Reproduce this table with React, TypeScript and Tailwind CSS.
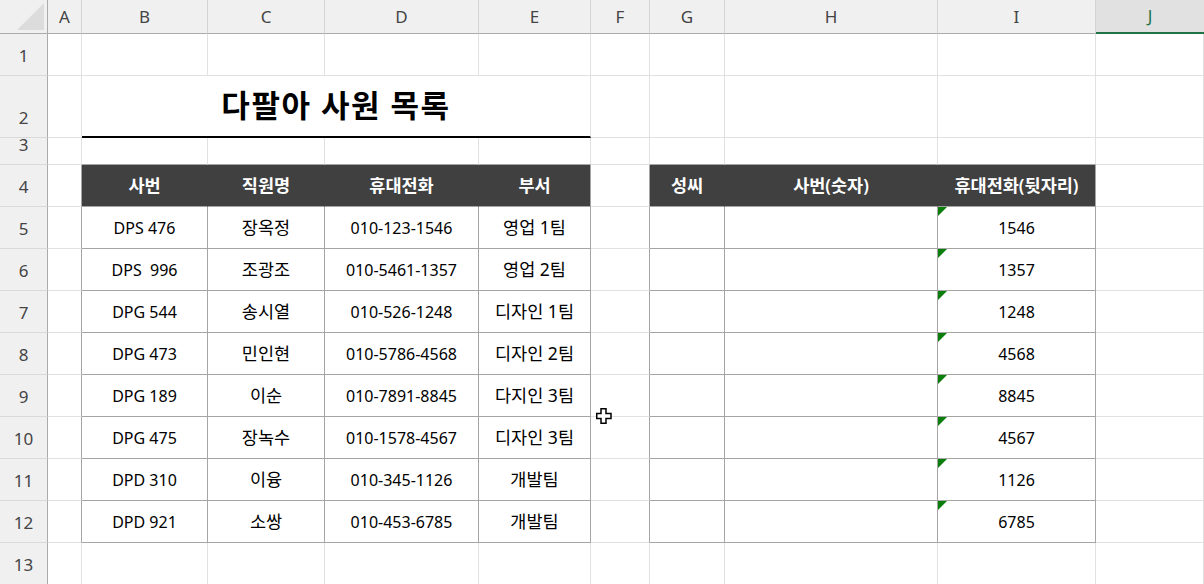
import React from 'react';

const COLS = ['A', 'B', 'C', 'D', 'E', 'F', 'G', 'H', 'I', 'J'];

const rows: string[][] = [
  ['DPS 476', '장옥정', '010-123-1546', '영업 1팀', '1546'],
  ['DPS  996', '조광조', '010-5461-1357', '영업 2팀', '1357'],
  ['DPG 544', '송시열', '010-526-1248', '디자인 1팀', '1248'],
  ['DPG 473', '민인현', '010-5786-4568', '디자인 2팀', '4568'],
  ['DPG 189', '이순', '010-7891-8845', '다지인 3팀', '8845'],
  ['DPG 475', '장녹수', '010-1578-4567', '디자인 3팀', '4567'],
  ['DPD 310', '이융', '010-345-1126', '개발팀', '1126'],
  ['DPD 921', '소쌍', '010-453-6785', '개발팀', '6785'],
];

const headers: Record<number, string> = {
  2: '사번',
  3: '직원명',
  4: '휴대전화',
  5: '부서',
  7: '성씨',
  8: '사번(숫자)',
  9: '휴대전화(뒷자리)',
};

const inTable = (r: number, c: number) =>
  r >= 4 && r <= 12 && ((c >= 2 && c <= 5) || (c >= 7 && c <= 9));

const cellText = (r: number, c: number) => {
  if (r === 4) return headers[c] ?? '';
  if (r >= 5 && r <= 12) {
    const d = rows[r - 5];
    if (c >= 2 && c <= 5) return d[c - 2];
    if (c === 9) return d[4];
  }
  return '';
};

const Cell = ({ r, c }: { r: number; c: number }) => {
  let right = 'border-r-[#e1e1e1]';
  if (r === 4 && inTable(r, c) && inTable(r, c + 1)) right = 'border-r-[#404040]';
  else if (inTable(r, c) || inTable(r, c + 1)) right = 'border-r-[#a5a5a5]';
  const bottom = inTable(r, c) || inTable(r + 1, c) ? 'border-b-[#a5a5a5]' : 'border-b-[#e1e1e1]';
  const head = r === 4 && inTable(r, c);
  const flag = c === 9 && r >= 5 && r <= 12;
  // hangul cells render a bit larger, like Malgun Gothic in Excel
  const korean = head || c === 3 || c === 5;

  return (
    <div
      className={`relative flex items-center justify-center border-r border-b ${right} ${bottom} ${
        head ? 'bg-[#404040] text-white font-semibold' : 'bg-white text-black'
      } whitespace-pre ${korean ? 'text-[17.5px]' : 'text-[16px]'}`}>
      {flag && (
        <svg className="absolute left-0 top-0" width="9" height="9" viewBox="0 0 9 9">
          <polygon points="0,0 9,0 0,9" fill="#0a7d0a" />
        </svg>
      )}
      {cellText(r, c)}
    </div>
  );
};

const RowHead = ({ n }: { n: number }) => (
  <div className="flex items-end justify-center pb-[7px] bg-[#f0f0f0] border-r border-b border-r-[#ababab] border-b-[#dadada] text-[17px] text-[#444444]">
    {n}
  </div>
);

export default function App() {
  const body: React.ReactNode[] = [];
  for (let r = 1; r <= 13; r++) {
    body.push(<RowHead key={`h${r}`} n={r} />);
    for (let c = 1; c <= 10; c++) {
      if (r === 2 && c >= 2 && c <= 5) {
        if (c === 2)
          body.push(
            <div
              key="title"
              className="col-span-4 flex items-center justify-center pb-[2px] bg-white border-r border-r-[#e1e1e1] border-b-2 border-b-black text-[31px] font-bold tracking-[1.5px] text-black">
              다팔아 사원 목록
            </div>
          );
        continue;
      }
      body.push(<Cell key={`${r}-${c}`} r={r} c={c} />);
    }
  }

  return (
    <div
      className="relative w-[1204px] h-[584px] overflow-hidden bg-white"
      style={{ fontFamily: '"Noto Sans", "Noto Sans CJK KR", sans-serif' }}>
      <div className="grid grid-cols-[48px_34px_126px_117px_154px_112px_59px_75px_213px_158px_108px] grid-rows-[34px_42px_62px_27px_repeat(10,42px)]">
        <div className="relative bg-[#f0f0f0] border-r border-b border-r-[#ababab] border-b-[#ababab]">
          <svg className="absolute left-0 top-0" width="48" height="34" viewBox="0 0 48 34">
            <polygon points="17,30 44,30 44,3" fill="#dcdcdc" />
          </svg>
        </div>
        {COLS.map((l) =>
          l === 'J' ? (
            <div
              key={l}
              className="flex items-center justify-center bg-[#e1e1e1] border-b-2 border-b-[#217346] text-[17px] text-[#217346]">
              {l}
            </div>
          ) : (
            <div
              key={l}
              className="flex items-center justify-center bg-[#f0f0f0] border-r border-b border-r-[#d4d4d4] border-b-[#ababab] text-[17px] text-[#444444]">
              {l}
            </div>
          )
        )}
        {body}
      </div>
      <svg className="absolute left-[596px] top-[408px]" width="16" height="16" viewBox="0 0 16 16">
        <polygon
          points="5,0.75 10,0.75 10,5.5 15,5.5 15,10.5 10,10.5 10,15.25 5,15.25 5,10.5 0.75,10.5 0.75,5.5 5,5.5"
          fill="white"
          stroke="black"
          strokeWidth="1.5"
        />
      </svg>
    </div>
  );
}
